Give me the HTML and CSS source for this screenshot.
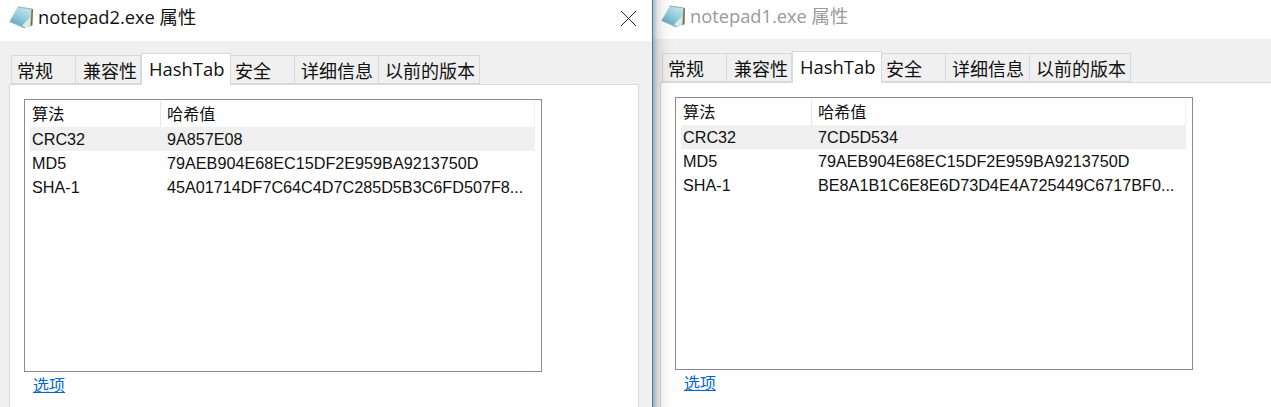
FILE: index.html
```html
<!DOCTYPE html>
<html lang="zh">
<head>
<meta charset="utf-8">
<title>属性</title>
<link rel="stylesheet" href="styles.css">
</head>
<body>
<svg class="defs" width="0" height="0" aria-hidden="true">
  <defs>
    <linearGradient id="pad" x1="0.7" y1="0" x2="0.2" y2="1">
      <stop offset="0" stop-color="#c4e6ee"/>
      <stop offset="0.55" stop-color="#8cc8d8"/>
      <stop offset="1" stop-color="#4f9db6"/>
    </linearGradient>
    <symbol id="notepad" viewBox="0 0 24 24">
      <path d="M9 0.500 L23 2.500 L22 19.500 L16 21.500 L0.500 15.500 Z" fill="url(#pad)"/>
      <path d="M9 0.500 L23 2.500 L22.500 3.500 L8.500 1.500 Z" fill="#a3b0b6"/>
      <path d="M13 19.500 L21.500 11 L21.500 19 L16 21.500 Z" fill="#dcebe8"/>
      <path d="M0.500 15.500 L16 21.500 L16 22.500 L0.500 16 Z" fill="#6f9fb0"/>
      <path d="M22.500 3 L24 3 L23.500 19 L21.500 20.500 Z" fill="#8a6a3a"/>
    </symbol>
  </defs>
</svg>
<section class="win win-active">
  <header class="title">
    <svg class="ico"><use href="#notepad"/></svg>
    <span class="title-text">notepad2.exe 属性</span>
    <svg class="close" viewBox="0 0 15 15"><path d="M0 0 15 15M15 0 0 15" stroke="#222" fill="none"/></svg>
  </header>
  <div class="body">
    <nav class="tabs">
      <span class="tab t1">常规</span><span class="tab t2">兼容性</span><span class="tab t3 on">HashTab</span><span class="tab t4">安全</span><span class="tab t5">详细信息</span><span class="tab t6">以前的版本</span>
    </nav>
    <div class="panel">
      <div class="list">
        <div class="row head"><span class="c1">算法</span><span class="c2">哈希值</span></div>
        <div class="row sel"><span class="c1">CRC32</span><span class="c2">9A857E08</span></div>
        <div class="row"><span class="c1">MD5</span><span class="c2">79AEB904E68EC15DF2E959BA9213750D</span></div>
        <div class="row"><span class="c1">SHA-1</span><span class="c2">45A01714DF7C64C4D7C285D5B3C6FD507F8...</span></div>
      </div>
      <a class="opt" href="#">选项</a>
    </div>
  </div>
</section>
<section class="win win-back">
  <header class="title">
    <svg class="ico"><use href="#notepad"/></svg>
    <span class="title-text">notepad1.exe 属性</span>
  </header>
  <div class="body">
    <nav class="tabs">
      <span class="tab t1">常规</span><span class="tab t2">兼容性</span><span class="tab t3 on">HashTab</span><span class="tab t4">安全</span><span class="tab t5">详细信息</span><span class="tab t6">以前的版本</span>
    </nav>
    <div class="panel">
      <div class="list">
        <div class="row head"><span class="c1">算法</span><span class="c2">哈希值</span></div>
        <div class="row sel"><span class="c1">CRC32</span><span class="c2">7CD5D534</span></div>
        <div class="row"><span class="c1">MD5</span><span class="c2">79AEB904E68EC15DF2E959BA9213750D</span></div>
        <div class="row"><span class="c1">SHA-1</span><span class="c2">BE8A1B1C6E8E6D73D4E4A725449C6717BF0...</span></div>
      </div>
      <a class="opt" href="#">选项</a>
    </div>
  </div>
</section>
</body>
</html>
```
FILE: styles.css
```css
* { box-sizing: border-box; }
html, body { margin: 0; height: 407px; overflow: hidden; }
body {
  display: flex;
  background: #fff;
  font-family: "Open Sans", "Noto Sans CJK SC", sans-serif;
  color: #111;
}
.defs { position: absolute; }
.win { display: flex; flex-direction: column; height: 407px; overflow: hidden; }
.win-active { width: 653px; border-right: 1px solid #1a86e0; }
.win-back { flex: 1; position: relative; }
.win-back::before {
  content: "";
  position: absolute;
  left: 0; top: 0; bottom: 0;
  width: 22px;
  background: linear-gradient(to right, rgba(0,0,0,.28), rgba(0,0,0,.1) 5px, rgba(0,0,0,.03) 12px, rgba(0,0,0,0));
  z-index: 2;
}
.title { display: flex; align-items: center; background: #fff; flex: none; }
.win-active .title { height: 41px; padding: 0 16px 5px 9px; }
.win-back .title { height: 39px; padding: 0 0 5px 8px; }
.ico { width: 24px; height: 24px; flex: none; }
.title-text { font-size: 18.3px; line-height: 24px; margin: 0 0 3px 5px; white-space: nowrap; }
.win-back .title-text { color: #9a9a9a; margin-bottom: 2px; }
.close { width: 15px; height: 15px; margin-left: auto; }
.body { flex: 1; background: #f0f0f0; display: flex; flex-direction: column; }
.win-active .body { padding: 0 13px 0 9px; }
.win-back .body { padding-left: 7px; }
.tabs { display: flex; align-items: flex-end; height: 43px; padding-left: 2px; flex: none; position: relative; z-index: 1; }
.tab {
  height: 29px;
  background: #f0f0f0;
  border: 1px solid #d9d9d9;
  border-left-width: 0;
  font-size: 18px;
  line-height: 30px;
  padding-left: 5px;
  white-space: nowrap;
}
.t1 { width: 65px; border-left-width: 1px; }
.t2 { width: 65px; padding-left: 7px; }
.t3 { width: 90px; padding-left: 7px; }
.t4 { width: 64px; padding-left: 4px; }
.t5 { width: 84px; padding-left: 6px; }
.t6 { width: 101px; padding-left: 6px; }
.tab.on {
  height: 32px;
  background: #fff;
  border-left-width: 1px;
  border-bottom: 0;
  margin-bottom: -1px;
  font-size: 18.4px;
  line-height: 29px;
}
.panel {
  flex: 1;
  background: #fff;
  border: 1px solid #d9d9d9;
  border-bottom: 0;
  padding: 14px 0 0 14px;
  min-height: 0;
}
.win-back .panel { border-right: 0; }
.list {
  width: 518px;
  height: 273px;
  border: 1px solid #8a8a92;
  padding: 1px 6px 0 5px;
  background: #fff;
  font-family: "Liberation Sans", "Noto Sans CJK SC", sans-serif;
}
.row { display: flex; height: 24px; font-size: 16.2px; line-height: 25px; white-space: nowrap; }
.head { height: 26px; line-height: 27px; border-right: 1px solid #efefef; }
.sel { background: #f0f0f0; }
.c1 { width: 131px; padding-left: 2px; flex: none; height: 100%; }
.c2 { padding-left: 6px; }
.head .c1 { border-right: 1px solid #e6e6e6; }
.opt { display: inline-block; margin: 2px 0 0 9px; font-size: 16px; line-height: 22px; color: #0066cc; }
```
